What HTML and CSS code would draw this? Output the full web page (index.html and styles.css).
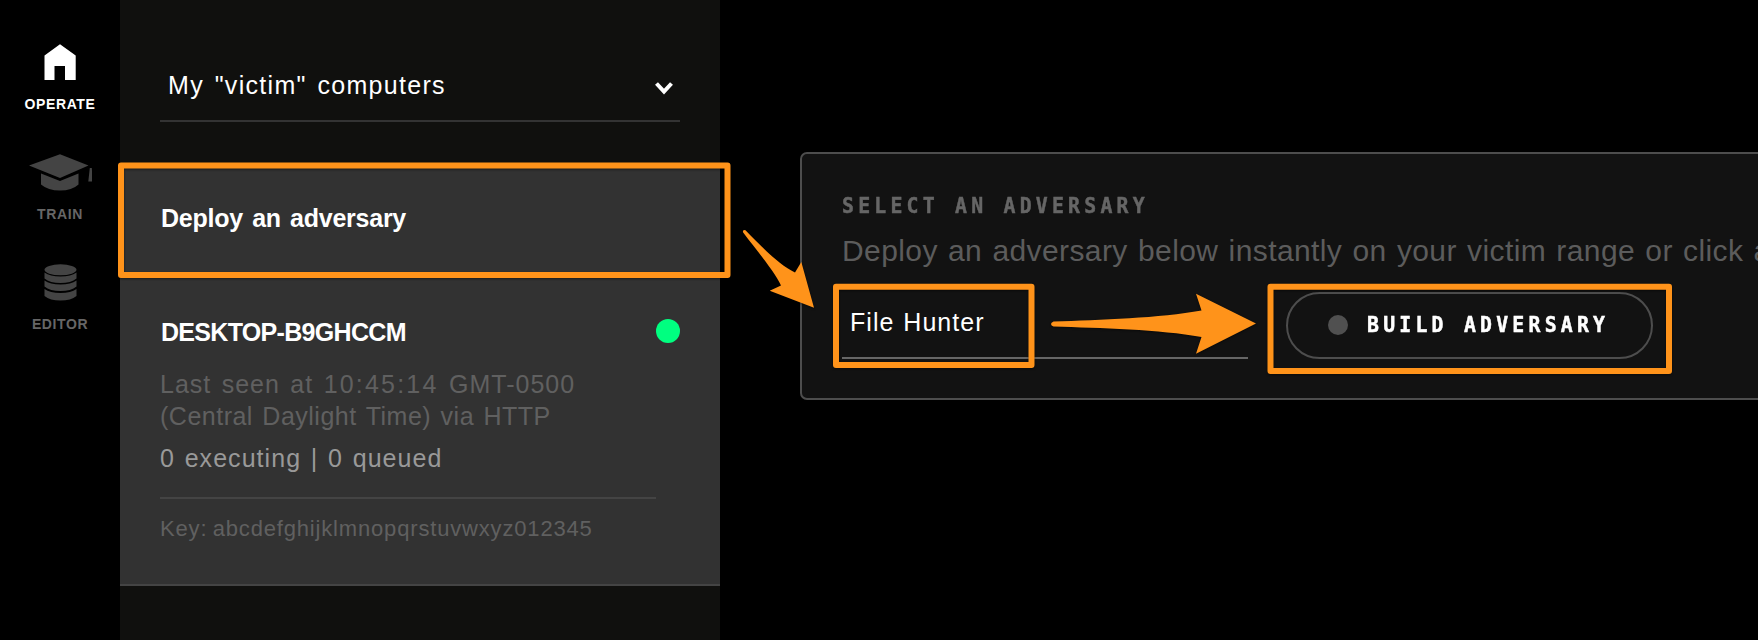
FILE: index.html
```
<!DOCTYPE html>
<html lang="en">
<head>
<meta charset="utf-8">
<title>Operate</title>
<link rel="stylesheet" href="styles.css">
</head>
<body>
<div class="app">
  <nav class="rail">
    <a class="rail-item active">
      <svg width="64" height="38" viewBox="0 0 64 38"><path fill="#fff" d="M16.500 37V12.500L32 1.200 47.700 12.500V37H37V23H26.500V37z"/></svg>
      <span>OPERATE</span>
    </a>
    <a class="rail-item">
      <svg width="64" height="38" viewBox="0 0 64 38"><path fill="#444" d="M1 12.500 32 1.300 60.500 12.500 32 25zM13 20.500 32 28 50.500 20.500V31.500Q44 37.500 32 37.500T13 31.500zM61.800 15h2L64.700 28.500H60.300z"/></svg>
      <span>TRAIN</span>
    </a>
    <a class="rail-item">
      <svg width="64" height="38" viewBox="0 0 64 38"><g fill="#444"><ellipse cx="32.500" cy="6.800" rx="16" ry="5.500"/><path d="M16.500 9.500Q22 13.500 32.500 13.500T48.500 9.500V15.500Q43 20 32.500 20T16.500 15.500zM16.500 17.500Q22 21.500 32.500 21.500T48.500 17.500V23.500Q43 28 32.500 28T16.500 23.500zM16.500 26Q22 30 32.500 30T48.500 26V33Q43 37.500 32.500 37.500T16.500 33z"/></g></svg>
      <span>EDITOR</span>
    </a>
  </nav>
  <aside class="side">
    <div class="range"><span class="t-range">My "victim" computers</span>
      <svg width="20" height="14" viewBox="0 0 20 14"><path d="M2.500 2.500 10 10.500 17.500 2.500" fill="none" stroke="#fff" stroke-width="4"/></svg>
    </div>
    <div class="deploy"><span class="t-deploy">Deploy an adversary</span></div>
    <section class="agent">
      <div class="agent-head"><span class="t-host">DESKTOP-B9GHCCM</span><i class="online"></i></div>
      <div class="seen"><span class="t-seen1">Last seen at <time>10:45:14</time> GMT-0500</span><br><span class="t-seen2">(Central Daylight Time) via HTTP</span></div>
      <div class="queue"><span class="t-queue">0 executing | 0 queued</span></div>
      <div class="key"><span class="t-key">Key: abcdefghijklmnopqrstuvwxyz012345</span></div>
    </section>
  </aside>
  <main class="main">
    <section class="card">
      <h2><span class="t-select">SELECT AN ADVERSARY</span></h2>
      <p><span class="t-desc">Deploy an adversary below instantly on your victim range or click a</span></p>
      <div class="controls">
        <div class="picker"><span class="t-file">File Hunter</span></div>
        <button class="build"><i></i><span class="t-build">BUILD ADVERSARY</span></button>
      </div>
    </section>
  </main>
</div>
<svg class="notes" width="1758" height="640" viewBox="0 0 1758 640">
  <g fill="none" stroke="#ff931a" stroke-width="6" stroke-linejoin="round">
    <rect x="121" y="165.500" width="606.500" height="109.500"/>
    <rect x="836" y="286.700" width="195.500" height="78.300"/>
    <rect x="1270.500" y="286.700" width="398.500" height="84.300"/>
  </g>
  <g fill="#ff931a">
    <path d="M745.500 230.300C759 244 779 265 795 272.500L801.300 262 814 307.700 769.700 290.700 781 285.500C775 272 757 251 743 232.300Q742.500 229 745.500 230.300z"/>
    <path d="M1053.500 321.500C1100 320 1160 318 1201.500 310.500L1196 293.700 1256 323.500 1196 353.700 1201.500 337C1160 329.500 1100 328 1053.500 326.500Q1051 325.500 1051 324T1053.500 321.500z"/>
  </g>
</svg>
</body>
</html>
```

FILE: styles.css
```
* { box-sizing: border-box; }
body { margin: 0; background: #000; overflow: hidden; font-family: "Liberation Sans", Arial, sans-serif; color: #fff; }
.app { display: flex; width: 1758px; height: 640px; overflow: hidden; }
span { white-space: nowrap; }

.rail { flex: none; width: 120px; padding-top: 43px; }
.rail-item { display: flex; flex-direction: column; align-items: center; height: 110px; color: #666; font-size: 14px; line-height: 20px; font-weight: 700; letter-spacing: .6px; }
.rail-item span { margin-top: 12.500px; }
.rail-item.active { color: #fff; }

.side { flex: none; width: 600px; background: #10100e; }
.range { display: flex; justify-content: space-between; align-items: center; height: 72px; margin: 50px 40px 0; padding: 0 6px 0 8px; border-bottom: 2px solid #333; font-size: 25px; }
.range svg { margin-top: 5px; }
.deploy { display: flex; align-items: center; height: 110px; margin-top: 43px; padding: 0 0 4px 40px; background: #323232; font-size: 25px; font-weight: 700; }
.agent { height: 311px; padding: 43px 40px 0; background: #323232; border-bottom: 2px solid #444; }
.agent-head { display: flex; justify-content: space-between; align-items: center; height: 28px; font-size: 25px; font-weight: 700; }
.online { width: 24px; height: 24px; margin-top: -3px; border-radius: 50%; background: #00ff80; }
.seen { margin-top: 22px; font-size: 25px; line-height: 32px; color: #606060; }
.queue { width: 496px; height: 67px; padding-top: 10px; border-bottom: 2px solid #444; font-size: 25px; line-height: 32px; color: #999; }
.key { padding-top: 14px; font-size: 22px; line-height: 32px; color: #606060; }

.main { flex: 1; padding: 152px 0 0 80px; overflow: hidden; }
.card { width: 1000px; height: 248px; padding: 37px 0 0 40px; background: #121212; border: 2px solid #4d4d4d; border-radius: 7px; }
h2 { margin: 0; font: 700 22px/30px "DejaVu Sans Mono", monospace; color: #666; }
p { margin: 10px 0 0; font-size: 30px; line-height: 40px; color: #5c5c5c; }
.controls { display: flex; align-items: flex-start; margin-top: 21px; }
.picker { width: 406px; height: 67px; padding: 16px 0 0 8px; border-bottom: 2px solid #666; font-size: 25px; line-height: 28px; }
.build { display: flex; align-items: center; width: 367px; height: 67px; margin-left: 38px; padding: 0 0 1px 40px; background: none; border: 2px solid #4d4d4d; border-radius: 34px; color: #fff; font: 700 22px/30px "DejaVu Sans Mono", monospace; }
.build i { width: 20px; height: 20px; margin-right: 19px; border-radius: 50%; background: #505050; }
.notes { position: absolute; left: 0; top: 0; filter: drop-shadow(0 1px 1px rgba(0, 0, 0, .5)); }

.t-range { letter-spacing: 1.300px; word-spacing: 2.500px; }
.t-deploy { letter-spacing: -.250px; word-spacing: 2.600px; padding-left: 1px; }
.t-host { letter-spacing: -.690px; padding-left: 1px; }
.t-seen1 { letter-spacing: 1px; word-spacing: 2.500px; }
.t-seen1 time { letter-spacing: 2.200px; }
.t-seen2 { letter-spacing: .500px; word-spacing: 2px; }
.t-queue { letter-spacing: 1.050px; word-spacing: 1.700px; }
.t-key { letter-spacing: .830px; word-spacing: -1.600px; }
.t-desc { letter-spacing: .400px; word-spacing: 1.500px; }
.t-file { letter-spacing: 1.050px; word-spacing: .800px; }
.t-select, .t-build { display: inline-block; letter-spacing: 4.700px; transform: scaleX(.9); transform-origin: left; -webkit-text-stroke: .5px; }
.t-build { width: 240px; text-align: left; }
```
